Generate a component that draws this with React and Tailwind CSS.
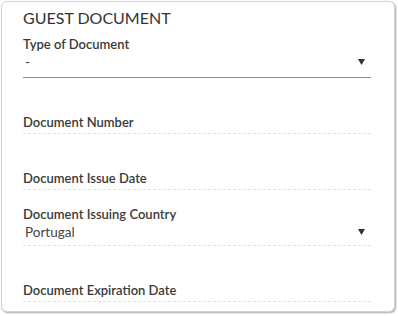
import React from 'react'

const fields = [
  { label: 'Type of Document', value: '-', select: true, solid: true },
  { label: 'Document Number' },
  { label: 'Document Issue Date' },
  { label: 'Document Issuing Country', value: 'Portugal', select: true },
  { label: 'Document Expiration Date' },
]

function Arrow() {
  return (
    <svg width="7" height="6" viewBox="0 0 7 6" className="shrink-0">
      <path d="M0 0 H7 L3.5 6 Z" fill="#333" />
    </svg>
  )
}

export default function App() {
  return (
    <div className="w-[398px] h-[316px] bg-white p-px font-['Lato',sans-serif]">
      <div className="w-[394px] h-[311px] rounded-md border border-[#d4d4d4] bg-white shadow-[1px_1px_2px_rgba(0,0,0,0.35)] pl-[21px] pr-[23px] pt-[6px]">
        <div className="text-[16px] leading-5 text-[#333]">GUEST DOCUMENT</div>

        {fields.map((f, i) => (
          <div key={i} className={`flex flex-col justify-end ${i === 0 ? 'h-[50px]' : 'h-[56px]'}`}>
            <div className="text-[13px] leading-[18px] font-semibold text-[#3a3a3a]">{f.label}</div>
            {f.value && (
              <div className="flex items-center justify-between h-[18px] pl-[2px] pr-[6px]">
                <span className="text-[13.5px] text-[#444]">{f.value}</span>
                <Arrow />
              </div>
            )}
            <div
              className={
                f.solid
                  ? 'mt-[6px] border-b border-[#8a8a8a]'
                  : f.value
                    ? 'mt-[4px] border-b border-dashed border-[#e2e2e2]'
                    : 'mt-[2px] border-b border-dashed border-[#e2e2e2]'
              }
            />
          </div>
        ))}
      </div>
    </div>
  )
}
